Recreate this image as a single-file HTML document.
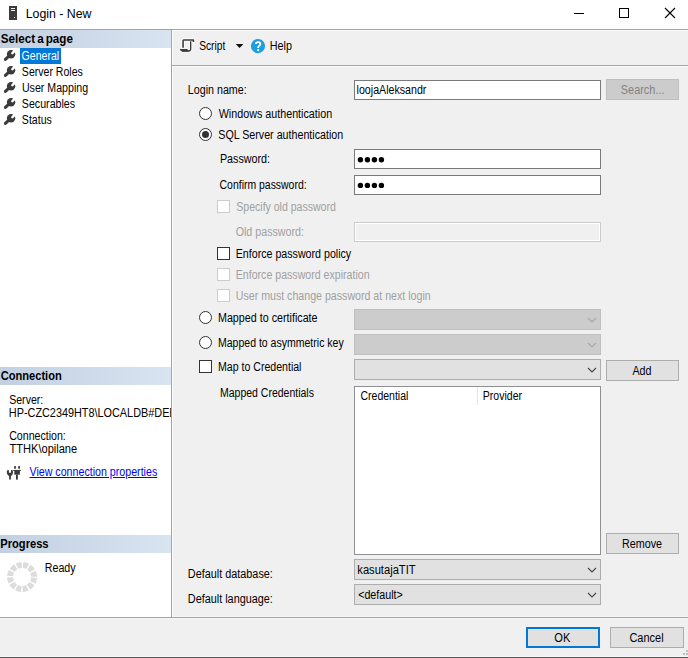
<!DOCTYPE html>
<html>
<head>
<meta charset="utf-8">
<title>Login - New</title>
<style>
html,body{margin:0;padding:0;}
body{width:688px;height:658px;position:relative;overflow:hidden;background:#f0f0f0;font-family:"Liberation Sans",sans-serif;font-size:11px;color:#000;}
.a{position:absolute;}
.t{position:absolute;white-space:pre;line-height:14px;height:14px;font-size:11px;transform-origin:0 50%;}
.hdr{position:absolute;left:0;width:171px;height:18px;background:linear-gradient(to right,#c2d0e1,#d9e4f1);}
.inp{position:absolute;box-sizing:border-box;background:#fff;border:1px solid #7a7a7a;}
.cb{position:absolute;box-sizing:border-box;width:13px;height:13px;background:#fff;border:1px solid #333;}
.cb.d{border-color:#cccccc;background:#fff;}
.rd{position:absolute;box-sizing:border-box;width:13px;height:13px;border-radius:50%;background:#fff;border:1px solid #333;}
.btn{position:absolute;box-sizing:border-box;background:#e1e1e1;border:1px solid #adadad;}
.cmb{position:absolute;box-sizing:border-box;left:354px;width:247px;height:21px;background:#e1e1e1;border:1px solid #adadad;}
.cmb.d{background:#cccccc;border-color:#bfbfbf;}
svg{position:absolute;overflow:visible;}
</style>
</head>
<body>
<!-- title bar -->
<div class="a" style="left:0;top:0;width:688px;height:29px;background:#fff;"></div>
<svg style="left:0;top:0;" width="688" height="30">
  <rect x="9" y="6" width="8" height="14" fill="#3c3c3c"/>
  <rect x="11" y="8" width="4" height="1" fill="#f0f0f0"/>
  <rect x="11" y="10" width="4" height="1" fill="#f0f0f0"/>
  <rect x="14" y="17" width="1" height="1" fill="#f0f0f0"/>
  <rect x="574" y="13" width="10" height="1" fill="#000"/>
  <rect x="619.5" y="8.5" width="9" height="9" fill="none" stroke="#000" stroke-width="1"/>
  <path d="M665 8 L675 18 M675 8 L665 18" stroke="#000" stroke-width="1.1" fill="none"/>
</svg>
<!-- left panel -->
<div class="a" style="left:0;top:30px;width:171px;height:587px;background:#fff;"></div>
<div class="a" style="left:0;top:29px;width:688px;height:1px;background:#a2a4aa;"></div>
<div class="a" style="left:172px;top:30px;width:516px;height:1px;background:#fbfbfb;"></div>
<div class="a" style="left:171px;top:29px;width:1px;height:588px;background:#a2a4aa;"></div>
<div class="a" style="left:172px;top:30px;width:1px;height:587px;background:#fbfbfb;"></div>
<div class="a" style="left:172px;top:65px;width:516px;height:1px;background:#a2a4aa;"></div>
<div class="a" style="left:172px;top:66px;width:516px;height:1px;background:#fbfbfb;"></div>
<div class="a" style="left:173px;top:616px;width:515px;height:1px;background:#f9f9f9;"></div>
<div class="a" style="left:0;top:617px;width:688px;height:1px;background:#a2a4aa;"></div>
<div class="a" style="left:0;top:618px;width:688px;height:1px;background:#f7f7f7;"></div>
<div class="a" style="left:0;top:656px;width:688px;height:1px;background:#f8f8f8;"></div>
<div class="a" style="left:0;top:657px;width:688px;height:1px;background:#555;"></div>
<div class="hdr" style="top:30px;"></div>
<div class="hdr" style="top:367px;"></div>
<div class="hdr" style="top:535px;"></div>
<div class="a" style="left:20px;top:48px;width:41px;height:16px;background:#0078d7;"></div>
<!-- icons -->
<svg style="left:0;top:0;" width="688" height="658">
  <g transform="translate(0,50)"><path d="M5.4 9.4 L10.6 4.6" stroke="#3b3b3b" stroke-width="3" stroke-linecap="round" fill="none"/><circle cx="11.1" cy="4.3" r="4.2" fill="#3b3b3b"/><path d="M12.4 3.2 L16.5 -1" stroke="#fff" stroke-width="2.5" stroke-linecap="round" fill="none"/></g>
  <g transform="translate(0,66)"><path d="M5.4 9.4 L10.6 4.6" stroke="#3b3b3b" stroke-width="3" stroke-linecap="round" fill="none"/><circle cx="11.1" cy="4.3" r="4.2" fill="#3b3b3b"/><path d="M12.4 3.2 L16.5 -1" stroke="#fff" stroke-width="2.5" stroke-linecap="round" fill="none"/></g>
  <g transform="translate(0,82)"><path d="M5.4 9.4 L10.6 4.6" stroke="#3b3b3b" stroke-width="3" stroke-linecap="round" fill="none"/><circle cx="11.1" cy="4.3" r="4.2" fill="#3b3b3b"/><path d="M12.4 3.2 L16.5 -1" stroke="#fff" stroke-width="2.5" stroke-linecap="round" fill="none"/></g>
  <g transform="translate(0,98)"><path d="M5.4 9.4 L10.6 4.6" stroke="#3b3b3b" stroke-width="3" stroke-linecap="round" fill="none"/><circle cx="11.1" cy="4.3" r="4.2" fill="#3b3b3b"/><path d="M12.4 3.2 L16.5 -1" stroke="#fff" stroke-width="2.5" stroke-linecap="round" fill="none"/></g>
  <g transform="translate(0,114)"><path d="M5.4 9.4 L10.6 4.6" stroke="#3b3b3b" stroke-width="3" stroke-linecap="round" fill="none"/><circle cx="11.1" cy="4.3" r="4.2" fill="#3b3b3b"/><path d="M12.4 3.2 L16.5 -1" stroke="#fff" stroke-width="2.5" stroke-linecap="round" fill="none"/></g>
  <!-- script icon -->
  <g fill="none" stroke="#fbfbfb" stroke-width="3.4" stroke-linejoin="round" stroke-linecap="round">
    <path d="M193.4 41.6 V39.9 H183.8 Q183.05 39.9 183.05 40.7 V47.4"/>
    <path d="M190.65 41.2 V49.3 Q190.65 50.9 189 50.9 H181.5"/>
  </g>
  <g fill="none" stroke="#3b3b3b" stroke-linejoin="round">
    <path d="M193.4 42.1 V39.95 H183.8 Q183.05 39.95 183.05 40.7 V47.8" stroke-width="1.6"/>
    <path d="M190.65 41.2 V49.3 Q190.65 50.95 189 50.95 H182" stroke-width="1.4"/>
  </g>
  <path d="M179.9 49.1 H187.4 Q187.5 50.6 189.2 51.5 H182.2 Q180.1 51.6 179.9 49.1 Z" fill="#3b3b3b"/>
  <path d="M235.7 44 H243.4 L239.55 48 Z" fill="#111"/>
  <circle cx="258" cy="46.1" r="7.1" fill="#1e9de0"/>
  <path d="M255.9 44.1 Q255.9 42.1 258.2 42.1 Q260.3 42.1 260.3 44 Q260.3 45.2 259.1 46 Q258.1 46.7 258.1 48" fill="none" stroke="#fff" stroke-width="1.8"/>
  <rect x="257.2" y="49.2" width="1.9" height="1.9" fill="#fff"/>
  <!-- connection icon -->
  <g fill="#3b3b3b">
    <path d="M6.9 470.7 Q7.2 470 8.9 469.9 V472.7 H11 V469.9 Q12.6 470 12.9 470.7 Q13.5 474.6 10.9 475.9 V479.6 H9.1 V475.9 Q6.3 474.6 6.9 470.7 Z"/>
    <rect x="14.1" y="466.1" width="1.8" height="2.6"/>
    <rect x="18.2" y="466.1" width="1.8" height="2.6"/>
    <rect x="13.3" y="469.9" width="7.5" height="1.1"/>
    <rect x="14.3" y="470.9" width="5.6" height="3.8"/>
    <rect x="16" y="474.6" width="1.9" height="5"/>
  </g>
  <!-- spinner -->
  <circle cx="22.05" cy="576.95" r="12" fill="none" stroke="#dcdcdc" stroke-width="6" stroke-dasharray="4.883 1.4" stroke-dashoffset="-0.7"/>
</svg>
<!-- form controls -->
<div class="inp" style="left:354px;top:80px;width:247px;height:20px;"></div>
<div class="btn" style="left:606px;top:79px;width:73px;height:21px;background:#cccccc;border-color:#bfbfbf;"></div>
<div class="rd" style="left:199px;top:107px;"></div>
<div class="rd" style="left:199px;top:128px;"></div>
<div class="a" style="left:202px;top:131px;width:7px;height:7px;border-radius:50%;background:#333;"></div>
<div class="inp" style="left:354px;top:149px;width:247px;height:20px;"></div>
<div class="inp" style="left:354px;top:175px;width:247px;height:20px;"></div>
<div class="cb d" style="left:217px;top:200px;"></div>
<div class="inp" style="left:354px;top:222px;width:247px;height:20px;background:#f0f0f0;border-color:#cccccc;box-shadow:inset 0 0 0 1px #fff;"></div>
<div class="cb" style="left:217px;top:247px;"></div>
<div class="cb d" style="left:217px;top:268px;"></div>
<div class="cb d" style="left:217px;top:289px;"></div>
<div class="rd" style="left:199px;top:311px;"></div>
<div class="rd" style="left:199px;top:336px;"></div>
<div class="cb" style="left:199px;top:360px;"></div>
<div class="cmb d" style="top:309px;"></div>
<div class="cmb d" style="top:334px;"></div>
<div class="cmb" style="top:359px;"></div>
<div class="cmb" style="top:559px;"></div>
<div class="cmb" style="top:584px;"></div>
<div class="btn" style="left:606px;top:360px;width:73px;height:21px;"></div>
<div class="inp" style="left:354px;top:386px;width:247px;height:169px;border-color:#8f9094;"></div>
<div class="a" style="left:477px;top:387px;width:1px;height:18px;background:#e5e5e5;"></div>
<div class="btn" style="left:606px;top:533px;width:73px;height:21px;"></div>
<div class="btn" style="left:526px;top:627px;width:74px;height:21px;border:2px solid #0078d7;"></div>
<div class="btn" style="left:610px;top:627px;width:74px;height:21px;"></div>
<svg style="left:0;top:0;" width="688" height="658">
  <path d="M588 318 l4 4 l4 -4" fill="none" stroke="#a8a8a8" stroke-width="1.1"/>
  <path d="M588 343 l4 4 l4 -4" fill="none" stroke="#a8a8a8" stroke-width="1.1"/>
  <path d="M588 368 l4 4 l4 -4" fill="none" stroke="#444" stroke-width="1.1"/>
  <path d="M588 568 l4 4 l4 -4" fill="none" stroke="#444" stroke-width="1.1"/>
  <path d="M588 593 l4 4 l4 -4" fill="none" stroke="#444" stroke-width="1.1"/>
  <!-- password dots -->
  <g fill="#000">
    <circle cx="360.4" cy="159.7" r="2.7"/><circle cx="367.4" cy="159.7" r="2.7"/><circle cx="374.4" cy="159.7" r="2.7"/><circle cx="381.4" cy="159.7" r="2.7"/>
    <circle cx="360.4" cy="185.4" r="2.7"/><circle cx="367.4" cy="185.4" r="2.7"/><circle cx="374.4" cy="185.4" r="2.7"/><circle cx="381.4" cy="185.4" r="2.7"/>
  </g>
  <g fill="#bfbfbf">
    <rect x="686" y="650" width="2" height="2"/>
    <rect x="683" y="653" width="2" height="2"/>
    <rect x="686" y="653" width="2" height="2"/>
  </g>
</svg>
<span class="t" style="left:25px;top:7px;transform:translateX(0.67px) scaleX(1.0286);font-size:12px;-webkit-text-stroke:0;">Login - New</span>
<span class="t" style="left:0px;top:32px;transform:translateX(0.75px) scaleX(0.9303);font-size:12.5px;font-weight:bold;-webkit-text-stroke:0;word-spacing:-1.2px;">Select a page</span>
<span class="t" style="left:0px;top:369px;transform:translateX(0.66px) scaleX(0.8889);font-size:12.5px;font-weight:bold;-webkit-text-stroke:0;">Connection</span>
<span class="t" style="left:0px;top:537px;transform:translateX(0.32px) scaleX(0.8889);font-size:12.5px;font-weight:bold;-webkit-text-stroke:0;">Progress</span>
<span class="t" style="left:21px;top:49px;transform:translateX(0.57px) scaleX(0.8442);font-size:12.5px;color:#fff;">General</span>
<span class="t" style="left:21px;top:65px;transform:translateX(0.87px) scaleX(0.8436);font-size:12.5px;">Server Roles</span>
<span class="t" style="left:21px;top:81px;transform:translateX(0.95px) scaleX(0.8500);font-size:12.5px;">User Mapping</span>
<span class="t" style="left:21px;top:97px;transform:translateX(0.87px) scaleX(0.8504);font-size:12.5px;">Securables</span>
<span class="t" style="left:21px;top:113px;transform:translateX(0.87px) scaleX(0.8436);font-size:12.5px;">Status</span>
<span class="t" style="left:9px;top:393px;transform:translateX(0.17px) scaleX(0.8468);font-size:12.5px;">Server:</span>
<div class="a" style="left:0;top:0;width:171px;height:658px;overflow:hidden;"><span class="t" style="left:8px;top:406px;transform:translateX(0.83px) scaleX(0.8688);font-size:12.5px;">HP-CZC2349HT8\LOCALDB#DEB7</span></div>
<span class="t" style="left:9px;top:429px;transform:translateX(0.17px) scaleX(0.8492);font-size:12.5px;">Connection:</span>
<span class="t" style="left:9px;top:442px;transform:translateX(0.48px) scaleX(0.8860);font-size:12.5px;">TTHK\opilane</span>
<span class="t" style="left:29px;top:465px;transform:translateX(0.49px) scaleX(0.8523);font-size:12.5px;color:#0000ff;text-decoration:underline;">View connection properties</span>
<span class="t" style="left:44px;top:561px;transform:translateX(0.75px) scaleX(0.8541);font-size:12.5px;">Ready</span>
<span class="t" style="left:199px;top:39px;transform:translateX(0.19px) scaleX(0.8160);font-size:12.5px;">Script</span>
<span class="t" style="left:269px;top:39px;transform:translateX(0.74px) scaleX(0.8622);font-size:12.5px;">Help</span>
<span class="t" style="left:187px;top:83px;transform:translateX(0.84px) scaleX(0.8555);font-size:12.5px;">Login name:</span>
<span class="t" style="left:356px;top:83px;transform:translateX(0.55px) scaleX(0.8519);font-size:12.5px;">loojaAleksandr</span>
<span class="t" style="left:620px;top:83px;transform:translateX(0.86px) scaleX(0.8705);font-size:12.5px;color:#838383;">Search...</span>
<span class="t" style="left:218px;top:107px;transform:translateX(0.69px) scaleX(0.8595);font-size:12.5px;">Windows authentication</span>
<span class="t" style="left:218px;top:128px;transform:translateX(0.27px) scaleX(0.8546);font-size:12.5px;">SQL Server authentication</span>
<span class="t" style="left:219px;top:152px;transform:translateX(0.94px) scaleX(0.8587);font-size:12.5px;">Password:</span>
<span class="t" style="left:219px;top:178px;transform:translateX(0.58px) scaleX(0.8351);font-size:12.5px;">Confirm password:</span>
<span class="t" style="left:236px;top:200px;transform:translateX(0.27px) scaleX(0.8429);font-size:12.5px;color:#a0a0a0;">Specify old password</span>
<span class="t" style="left:235px;top:225px;transform:translateX(0.67px) scaleX(0.8550);font-size:12.5px;color:#a0a0a0;">Old password:</span>
<span class="t" style="left:235px;top:247px;transform:translateX(0.75px) scaleX(0.8521);font-size:12.5px;">Enforce password policy</span>
<span class="t" style="left:235px;top:268px;transform:translateX(0.75px) scaleX(0.8488);font-size:12.5px;color:#a0a0a0;">Enforce password expiration</span>
<span class="t" style="left:235px;top:289px;transform:translateX(0.75px) scaleX(0.8501);font-size:12.5px;color:#a0a0a0;">User must change password at next login</span>
<span class="t" style="left:217px;top:311px;transform:translateX(0.94px) scaleX(0.8585);font-size:12.5px;">Mapped to certificate</span>
<span class="t" style="left:217px;top:336px;transform:translateX(0.96px) scaleX(0.8418);font-size:12.5px;">Mapped to asymmetric key</span>
<span class="t" style="left:217px;top:360px;transform:translateX(0.95px) scaleX(0.8465);font-size:12.5px;">Map to Credential</span>
<span class="t" style="left:219px;top:386px;transform:translateX(0.96px) scaleX(0.8399);font-size:12.5px;">Mapped Credentials</span>
<span class="t" style="left:360px;top:389px;transform:translateX(0.48px) scaleX(0.8396);font-size:12.5px;">Credential</span>
<span class="t" style="left:482px;top:389px;transform:translateX(0.76px) scaleX(0.8441);font-size:12.5px;">Provider</span>
<span class="t" style="left:632px;top:364px;transform:translateX(0.40px) scaleX(0.8515);font-size:12.5px;">Add</span>
<span class="t" style="left:621px;top:537px;transform:translateX(0.94px) scaleX(0.8622);font-size:12.5px;">Remove</span>
<span class="t" style="left:187px;top:567px;transform:translateX(0.83px) scaleX(0.8678);font-size:12.5px;">Default database:</span>
<span class="t" style="left:187px;top:592px;transform:translateX(0.83px) scaleX(0.8678);font-size:12.5px;">Default language:</span>
<span class="t" style="left:357px;top:563px;transform:translateX(0.32px) scaleX(0.8920);font-size:12.5px;">kasutajaTIT</span>
<span class="t" style="left:358px;top:588px;transform:translateX(0.16px) scaleX(0.8570);font-size:12.5px;">&lt;default&gt;</span>
<span class="t" style="left:554px;top:631px;transform:translateX(0.35px) scaleX(0.8870);font-size:12.5px;">OK</span>
<span class="t" style="left:629px;top:631px;transform:translateX(0.45px) scaleX(0.8773);font-size:12.5px;">Cancel</span>
</body>
</html>
